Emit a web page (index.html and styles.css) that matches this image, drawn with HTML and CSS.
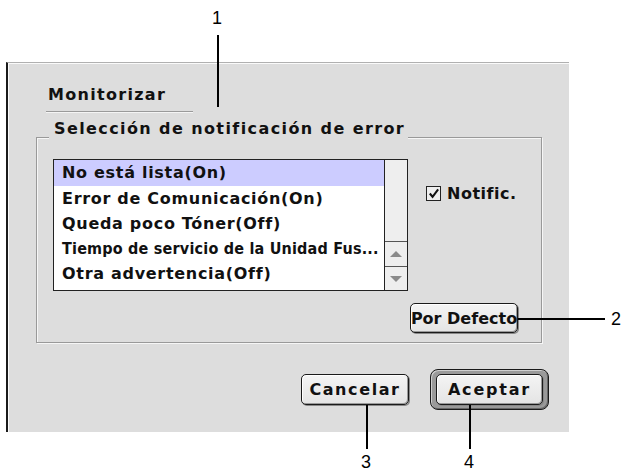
FILE: index.html
```html
<!DOCTYPE html>
<html lang="es">
<head>
<meta charset="utf-8">
<title>Monitorizar</title>
<link rel="stylesheet" href="styles.css">
</head>
<body>
<div class="stage">
  <div class="panel">
    <div class="heading">Monitorizar</div>
    <div class="group">
      <div class="group-title">Selección de notificación de error</div>
      <div class="group-body">
        <div class="listbox">
          <ul class="rows">
            <li class="row selected">No está lista(On)</li>
            <li class="row">Error de Comunicación(On)</li>
            <li class="row">Queda poco Tóner(Off)</li>
            <li class="row condensed">Tiempo de servicio de la Unidad Fus...</li>
            <li class="row">Otra advertencia(Off)</li>
          </ul>
          <div class="scrollbar">
            <div class="track"></div>
            <div class="arrow"><span class="tri up"></span></div>
            <div class="arrow"><span class="tri down"></span></div>
          </div>
        </div>
        <label class="check">
          <span class="box"><svg viewBox="0 0 14 14" width="14" height="14"><path d="M3 6.5 L6 10 L12 2" fill="none" stroke="#111" stroke-width="2.2"/></svg></span>
          <span class="check-label">Notific.</span>
        </label>
      </div>
      <div class="group-foot">
        <button class="btn btn-default-small"><span>Por Defecto</span></button>
      </div>
    </div>
    <div class="actions">
      <button class="btn btn-cancel"><span>Cancelar</span></button>
      <div class="ring"><button class="btn btn-ok"><span>Aceptar</span></button></div>
    </div>
  </div>

  <div class="callout num n1">1</div>
  <div class="callout vline l1"></div>
  <div class="callout hline l2"></div>
  <div class="callout num n2">2</div>
  <div class="callout vline l3"></div>
  <div class="callout num n3">3</div>
  <div class="callout vline l4"></div>
  <div class="callout num n4">4</div>
</div>
</body>
</html>
```

FILE: styles.css
```css
* { box-sizing: border-box; }
html, body { margin: 0; padding: 0; background: #fff; }
body { width: 623px; height: 471px; overflow: hidden; }

.stage {
  position: relative;
  width: 623px;
  height: 471px;
  padding-top: 62px;
  padding-left: 6px;
  font-family: "DejaVu Sans", sans-serif;
  font-weight: bold;
  font-size: 16px;
  color: #111;
}

.panel {
  width: 563px;
  height: 370px;
  background: #dddddd;
  border-top: 1px solid #b0b0b0;
  border-left: 2px solid #1a1a1a;
  box-shadow: inset 1px 1px 0 #fafafa;
  padding: 23px 0 0 28px;
  display: flex;
  flex-direction: column;
}

.heading {
  width: 147px;
  margin-left: 10px;
  padding: 0 2px 7px;
  line-height: 18px;
  border-bottom: 1px solid #9a9a9a;
  box-shadow: 0 1px 0 #f4f4f4;
  letter-spacing: 1.3px;
}

.group {
  position: relative;
  margin-top: 25px;
  width: 506px;
  height: 206px;
  border: 1px solid #999;
  box-shadow: 1px 1px 0 #f6f6f6, inset 1px 1px 0 #f6f6f6;
  display: flex;
  flex-direction: column;
}

.group-title {
  position: absolute;
  left: 12px;
  top: -18px;
  padding: 0 3px 2px 5px;
  background: #dddddd;
  line-height: 18px;
  letter-spacing: 1.4px;
}

.group-body {
  display: flex;
  padding: 21px 0 0 16px;
}

.listbox {
  display: flex;
  width: 355px;
  height: 132px;
  border: 1px solid #222;
  background: #fff;
}

.rows {
  list-style: none;
  margin: 0;
  padding: 0;
  flex: 1;
  min-width: 0;
}

.row {
  height: 26px;
  line-height: 26px;
  padding-left: 8px;
  white-space: nowrap;
  overflow: hidden;
  letter-spacing: 0.7px;
}
.row:nth-child(n+2) { height: 25px; line-height: 25px; }
.row.selected { background: #ccccff; }
.row.condensed {
  font-family: "DejaVu Sans Condensed", "DejaVu Sans", sans-serif;
  font-stretch: condensed;
  letter-spacing: 0.2px;
}

.scrollbar {
  width: 23px;
  flex: none;
  border-left: 1px solid #222;
  background: #eeeeee;
  display: flex;
  flex-direction: column;
}
.track { flex: 1; border-bottom: 1px solid #555; }
.arrow {
  height: 24px;
  display: flex;
  align-items: center;
  justify-content: center;
  background: #eeeeee;
}
.arrow + .arrow { border-top: 1px solid #555; }
.tri { width: 0; height: 0; border-left: 6px solid transparent; border-right: 6px solid transparent; }
.tri.up { border-bottom: 6px solid #8a8a8a; }
.tri.down { border-top: 6px solid #8a8a8a; }

.check {
  display: flex;
  align-items: center;
  gap: 6px;
  margin: 26px 0 0 18px;
  height: 17px;
  align-self: flex-start;
}
.box {
  width: 15px;
  height: 15px;
  border: 1px solid #222;
  background: #eeeeee;
  display: flex;
  align-items: center;
  justify-content: center;
}
.box svg { display: block; }
.check-label { letter-spacing: 0.5px; }

.group-foot {
  display: flex;
  justify-content: flex-end;
  padding-right: 23px;
  margin-top: 12px;
}

.btn {
  font: inherit;
  color: #111;
  padding: 0;
  margin: 0;
  border: 1px solid #1a1a1a;
  border-radius: 5px;
  background: linear-gradient(#f4f4f4, #e4e4e4);
  box-shadow: inset -1px -1px 0 #9a9a9a, inset 1px 1px 0 #ffffff, 1px 1px 0 #888;
  display: flex;
  align-items: center;
  justify-content: center;
  overflow: hidden;
  white-space: nowrap;
  letter-spacing: 1.6px;
}
.btn span { flex: none; }

.btn-default-small { width: 108px; height: 30px; letter-spacing: 0; }

.actions {
  display: flex;
  align-items: center;
  justify-content: flex-end;
  gap: 21px;
  margin-top: 26px;
  padding-right: 20px;
  width: 533px;
}

.btn-cancel { width: 108px; height: 31px; }
.ring {
  width: 119px;
  height: 41px;
  border: 1px solid #1a1a1a;
  border-radius: 8px;
  background: #9a9a9a;
  box-shadow: inset 1px 1px 0 #cfcfcf, inset -1px -1px 0 #666;
  padding: 4px 5px;
}
.btn-ok { width: 107px; height: 31px; letter-spacing: 1.8px; }

.callout { position: absolute; }
.num {
  font-family: "Liberation Sans", Arial, sans-serif;
  font-weight: normal;
  font-size: 18px;
  line-height: 20px;
  color: #000;
}
.vline { width: 2px; background: #000; }
.hline { height: 2px; background: #000; }
.n1 { left: 212px; top: 8px; }
.l1 { left: 217px; top: 35px; height: 72px; }
.l2 { left: 518px; top: 318px; width: 87px; }
.n2 { left: 611px; top: 309px; }
.l3 { left: 366px; top: 405px; height: 44px; }
.n3 { left: 361px; top: 452px; }
.l4 { left: 469px; top: 405px; height: 44px; }
.n4 { left: 464px; top: 452px; }
```
